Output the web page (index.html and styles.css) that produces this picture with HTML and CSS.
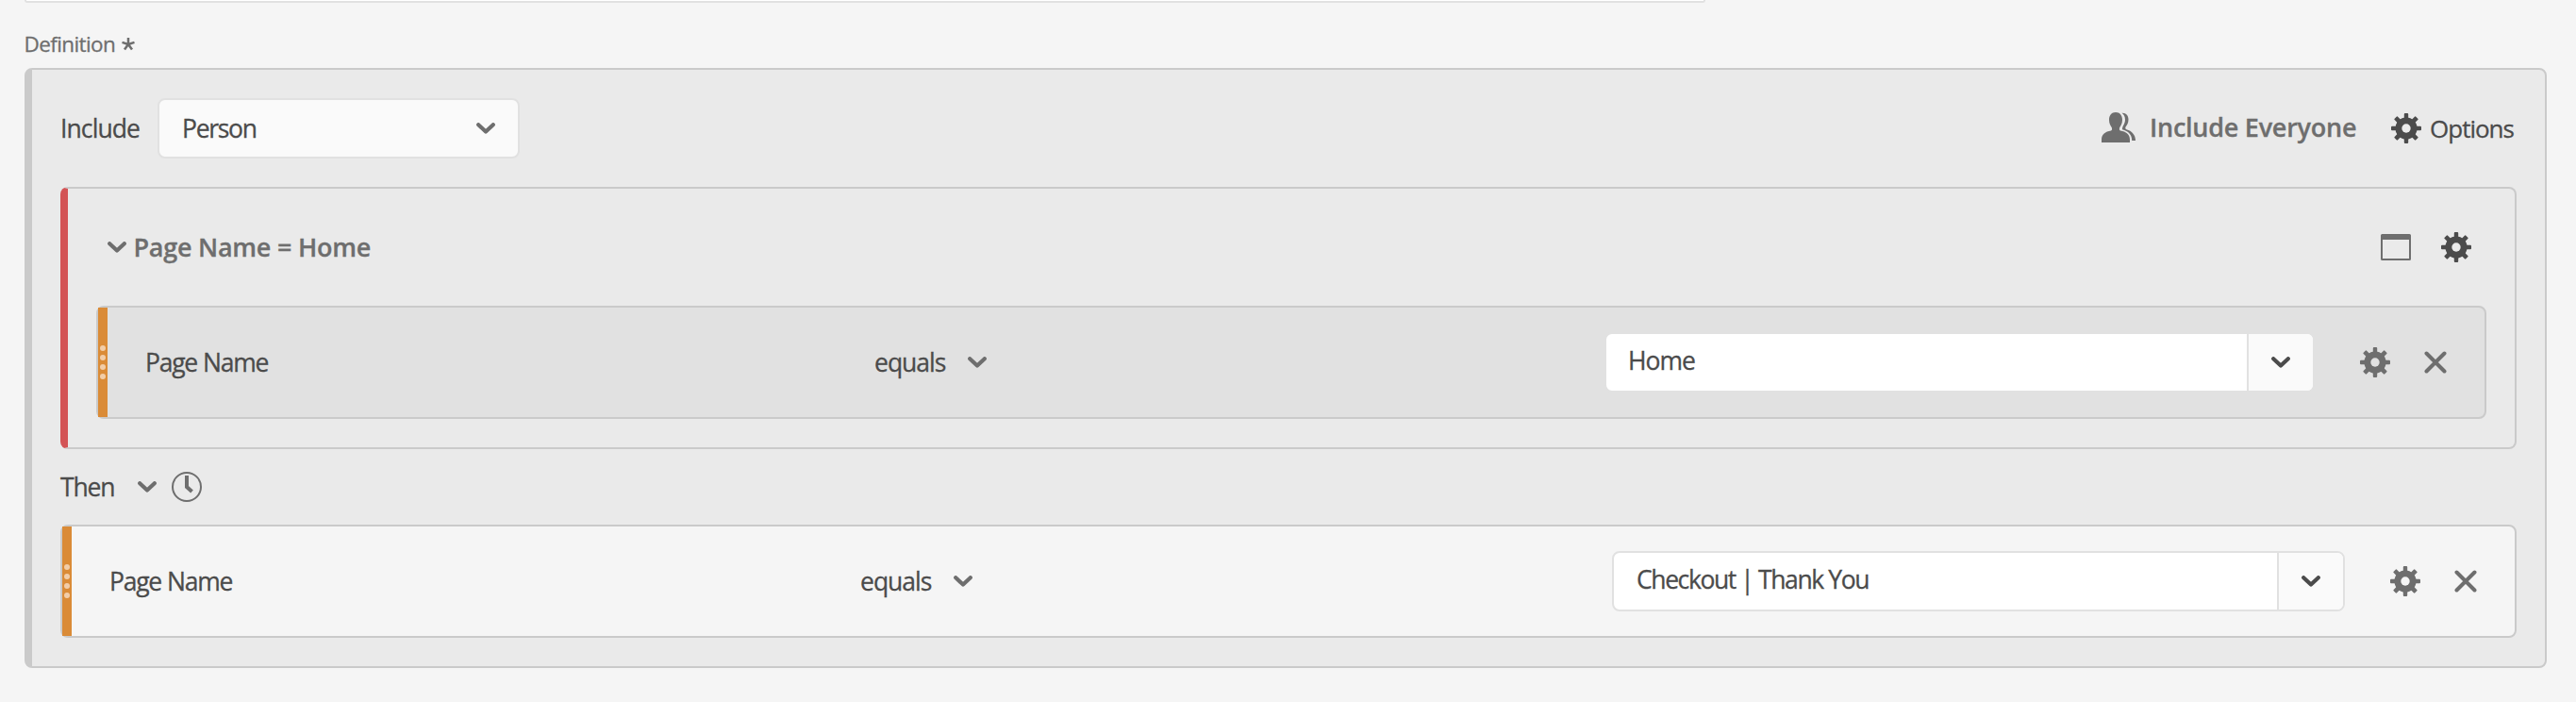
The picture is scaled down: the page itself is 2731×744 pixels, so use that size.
FILE: index.html
```
<!DOCTYPE html>
<html lang="en">
<head>
<meta charset="utf-8">
<title>Segment definition</title>
<link rel="stylesheet" href="styles.css">
</head>
<body>
<svg class="sprite" aria-hidden="true">
  <symbol id="chevron" viewBox="0 0 20 12"><path d="M2.2 2.2 10 9.600l7.800-7.400" fill="none" stroke="currentColor" stroke-width="4.2" stroke-linecap="round" stroke-linejoin="round"/></symbol>
  <symbol id="gear" viewBox="-16 -16 32 32">
    <g fill="currentColor">
      <rect x="-2.2" y="-16" width="4.4" height="32" rx="1"/><rect x="-16" y="-2.2" width="32" height="4.4" rx="1"/>
      <g transform="rotate(45)"><rect x="-2.4" y="-16" width="4.800" height="32" rx="1"/><rect x="-16" y="-2.4" width="32" height="4.800" rx="1"/></g>
      <circle r="11.600"/>
    </g>
    <circle r="4.700" fill="var(--hole)"/>
  </symbol>
  <symbol id="cross" viewBox="0 0 24 24"><path d="M2.500 2.500 21.500 21.500M21.500 2.500 2.500 21.500" stroke="currentColor" stroke-width="4" stroke-linecap="round"/></symbol>
  <symbol id="window" viewBox="0 0 32 28"><path d="M1.500 0h29A1.500 1.500 0 0 1 32 1.500V26.500A1.500 1.500 0 0 1 30.500 28H1.500A1.500 1.500 0 0 1 0 26.500V1.500A1.500 1.500 0 0 1 1.500 0ZM2 6V26H30V6Z" fill="currentColor" fill-rule="evenodd"/></symbol>
  <symbol id="clock" viewBox="0 0 32 32"><circle cx="16" cy="16" r="15" fill="none" stroke="currentColor" stroke-width="2"/><path d="M16 4V16l5.500 5" fill="none" stroke="currentColor" stroke-width="4"/></symbol>
  <symbol id="people" viewBox="0 0 36 32"><g fill="currentColor"><path d="M15 0C19.500 0 22 3.500 22 8C22 12 20.500 14 19.300 16C18.700 17.500 18.700 19 20 19.600C26 20.500 30 23.500 30 29V32H0V29C0 23.500 4 20.500 10 19.600C11.300 19 11.300 17.500 10.700 16C9.500 14 8 12 8 8C8 3.500 10.500 0 15 0Z"/><path d="M21.500.700C26 .300 28.500 3.500 28.500 7.500C28.500 11.500 27 13.500 25.500 15.500C25 17 25.300 17.800 26.500 18.200C32 19.500 36 24 36 30H32.200C32.200 23.500 28.500 20 22 18.200C21.800 14.500 25 12.500 25 8C25 4.500 23.500 2 21.500.700Z"/></g></symbol>
</svg>

<div class="previous-field"></div>
<div class="field-label"><span class="t-def">Definition</span><svg class="required" viewBox="-7 -7 14 14"><path d="M0 0V-7M0 0 6.500-2.100M0 0 4 5.600M0 0-4 5.600M0 0-6.500-2.100" stroke="currentColor" stroke-width="2.500"/></svg></div>

<main class="panel">
  <header class="panel-head">
    <span class="text t-include">Include</span>
    <div class="select"><span class="text t-person">Person</span><svg class="chevron"><use href="#chevron"/></svg></div>
    <div class="panel-actions">
      <svg class="people"><use href="#people"/></svg><span class="strong t-everyone">Include Everyone</span>
      <svg class="gear dark"><use href="#gear"/></svg><span class="text options">Options</span>
    </div>
  </header>

  <section class="group">
    <div class="group-head">
      <svg class="chevron"><use href="#chevron"/></svg><span class="strong t-title">Page Name = Home</span>
      <svg class="window"><use href="#window"/></svg><svg class="gear dark"><use href="#gear"/></svg>
    </div>
    <div class="rule rule-nested">
      <div class="handle"><i></i><i></i><i></i><i></i></div>
      <span class="text t-name">Page Name</span>
      <div class="operator"><span class="text t-equals">equals</span><svg class="chevron"><use href="#chevron"/></svg></div>
      <div class="combo"><span class="value text">Home</span><span class="toggle"><svg class="chevron dark"><use href="#chevron"/></svg></span></div>
      <div class="rule-actions"><svg class="gear"><use href="#gear"/></svg><svg class="cross"><use href="#cross"/></svg></div>
    </div>
  </section>

  <div class="sequence"><span class="text t-then">Then</span><svg class="chevron"><use href="#chevron"/></svg><svg class="clock"><use href="#clock"/></svg></div>

  <div class="rule rule-top">
    <div class="handle"><i></i><i></i><i></i><i></i></div>
    <span class="text t-name">Page Name</span>
    <div class="operator"><span class="text t-equals">equals</span><svg class="chevron"><use href="#chevron"/></svg></div>
    <div class="combo"><span class="value text t-checkout">Checkout | Thank You</span><span class="toggle"><svg class="chevron dark"><use href="#chevron"/></svg></span></div>
    <div class="rule-actions"><svg class="gear"><use href="#gear"/></svg><svg class="cross"><use href="#cross"/></svg></div>
  </div>
</main>
</body>
</html>
```
FILE: styles.css
```
* { box-sizing: border-box; }
body {
  margin: 0;
  height: 744px;
  background: #f5f5f5;
  color: #4b4b4b;
  font: 26.5px/36px "Open Sans", "Noto Sans", sans-serif;
}
svg { display: block; flex: none; color: #6e6e6e; }
.sprite { position: absolute; width: 0; height: 0; }
.text, .strong, .t-def { white-space: nowrap; -webkit-text-stroke: 0.3px currentColor; }
.text { letter-spacing: -1px; }
.strong { font-weight: 600; color: #6e6e6e; font-size: 27px; letter-spacing: -0.25px; }

.previous-field {
  width: 1782px; height: 3px; margin-left: 26px;
  background: #fff; border: 2px solid #e1e1e1; border-top: 0;
  border-radius: 0 0 8px 8px;
}
.field-label {
  display: flex; align-items: center; height: 69px; padding: 19px 0 0 25.500px;
  color: #6e6e6e; font-size: 22.5px; letter-spacing: -0.6px;
}
.required { width: 14px; height: 14px; margin-left: 6.500px; }

.panel {
  width: 2674px; height: 636px; margin-left: 26px; padding: 30px;
  background: #eaeaea; border: 2px solid #cacaca; border-left-width: 8px; border-radius: 8px;
}
.panel-head { display: flex; align-items: center; height: 64px; }
.t-include { width: 103px; letter-spacing: -0.9px; }
.select {
  display: flex; align-items: center; justify-content: space-between;
  width: 384px; height: 64px; padding: 0 24px;
  background: #fafafa; border: 2px solid #e1e1e1; border-radius: 8px;
}
.t-person { letter-spacing: -1.3px; }
.panel-actions { display: flex; align-items: center; margin-left: auto; width: 440px; }

.chevron { width: 20px; height: 12px; }
.gear { width: 32px; height: 32px; --hole: #eaeaea; }
.dark { color: #4b4b4b; }
.cross { width: 24px; height: 24px; }
.people { width: 36px; height: 32px; margin-bottom: 2px; }
.window { width: 32px; height: 28px; }
.clock { width: 32px; height: 32px; }

.t-everyone { width: 256px; margin: 0 0 3px 15px; }
.options { margin-left: 9px; font-size: 26px; }

.group {
  height: 278px; margin-top: 30px; padding: 0 30px 30px;
  border: 2px solid #cacaca; border-left: 8px solid #d35456; border-radius: 8px;
}
.group-head { display: flex; align-items: center; height: 124px; padding: 0 16px 0 12px; }
.group-head .window { margin-left: auto; margin-right: 32px; }
.t-title { margin-left: 7.500px; }

.rule {
  display: grid; align-items: center; height: 120px;
  border: 2px solid #cacaca; border-radius: 8px;
}
.rule-nested { background: #e1e1e1; grid-template-columns: 10px 813px 774px 753px 1fr; }
.rule-top { background: #f5f5f5; grid-template-columns: 10px 836px 797px 777px 1fr; }
.rule-nested .gear { --hole: #e1e1e1; }
.rule-top .gear { --hole: #f5f5f5; }
.handle {
  display: flex; flex-direction: column; align-items: center; justify-content: center; gap: 4px;
  height: 116px; background: #da8b37;
}
.handle i { width: 6px; height: 6px; border-radius: 50%; background: #f2cda8; }
.t-name { padding-left: 40px; letter-spacing: -1.25px; word-spacing: 0.5px; }
.operator { display: flex; align-items: center; }
.t-equals { width: 99px; letter-spacing: -1px; }
.combo {
  display: flex; height: 64px; background: #fff;
  border: 2px solid #e1e1e1; border-radius: 8px; overflow: hidden;
}
.value { flex: 1; padding: 10px 0 0 23px; }
.t-checkout { padding-left: 24px; letter-spacing: -1.4px; }
.toggle {
  display: flex; align-items: center; justify-content: center;
  width: 70px; background: #fafafa; border-left: 2px solid #e1e1e1;
}
.rule-nested .toggle { padding-right: 1px; }
.rule-actions { display: flex; align-items: center; gap: 36px; padding-left: 48px; }

.sequence { display: flex; align-items: center; height: 80px; }
.t-then { width: 82px; letter-spacing: -1.2px; }
.sequence .clock { margin-left: 16px; }
```
